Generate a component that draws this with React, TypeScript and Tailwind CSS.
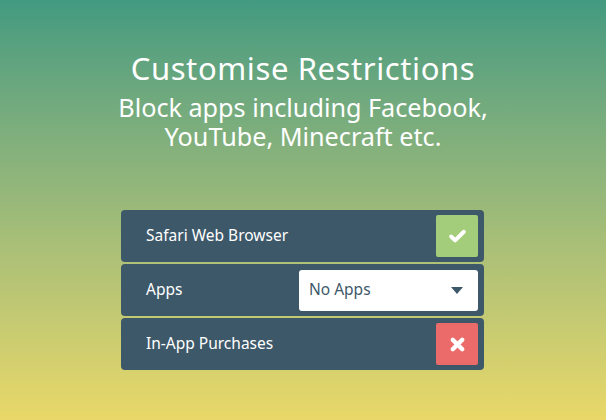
import { Check, X } from 'lucide-react';

const font = { fontFamily: '"Noto Sans", "Open Sans", sans-serif' };

function Row({ label, children }: { label: string; children: React.ReactNode }) {
  return (
    <div className="flex h-[52px] items-center justify-between rounded-[4px] bg-[#3d5869] pl-[25px] pr-[6px]">
      <span className="text-[15.5px] text-white">{label}</span>
      {children}
    </div>
  );
}

export default function App() {
  return (
    <div
      className="flex h-[420px] w-[606px] flex-col items-center bg-gradient-to-b from-[#429a80] to-[#e9d868] text-white"
      style={font}
    >
      {/* Heading */}
      <h1 className="mt-[48px] text-[31px] leading-[40px] tracking-[0.6px]">Customise Restrictions</h1>
      <div className="mt-[5px] flex flex-col items-center text-[25.2px] leading-[29px]">
        <p>Block apps including Facebook,</p>
        <p>YouTube, Minecraft etc.</p>
      </div>

      {/* Settings list */}
      <div className="mt-[59px] mr-[1px] flex w-[363px] flex-col gap-[2px]">
        <Row label="Safari Web Browser">
          <div className="flex h-[42px] w-[42px] items-center justify-center rounded-[2px] bg-[#a3cd7a]">
            <Check size={19} strokeWidth={5} className="text-white" />
          </div>
        </Row>
        <Row label="Apps">
          <div className="flex h-[41px] w-[179px] items-center justify-between rounded-[3px] bg-white pl-[10px] pr-[15px]">
            <span className="text-[15.5px] text-[#3d5869]">No Apps</span>
            <svg width="12" height="7" viewBox="0 0 12 7">
              <path d="M0 0h12L6 7z" fill="#3d5869" />
            </svg>
          </div>
        </Row>
        <Row label="In-App Purchases">
          <div className="flex h-[42px] w-[42px] items-center justify-center rounded-[2px] bg-[#eb6a6a]">
            <X size={19} strokeWidth={5.5} className="text-white" />
          </div>
        </Row>
      </div>
    </div>
  );
}
